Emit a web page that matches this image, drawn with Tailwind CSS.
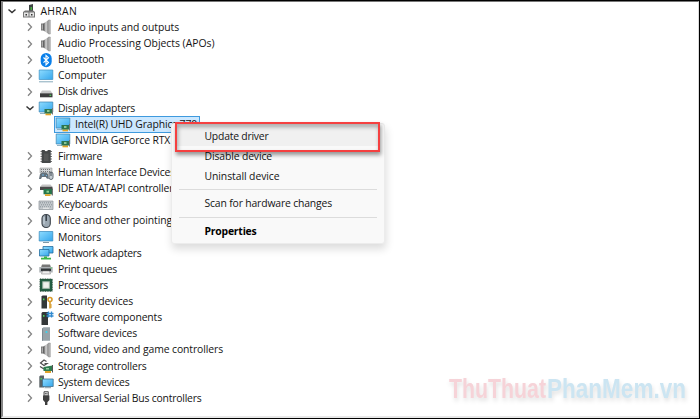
<!DOCTYPE html>
<html lang="en">
<head>
  <meta charset="UTF-8" />
  <meta name="viewport" content="width=device-width, initial-scale=1.0" />
  <title>Device Manager</title>
  <script src="https://cdn.jsdelivr.net/npm/@tailwindcss/browser@4"></script>
</head>
<body class="bg-white text-[#141414] font-['Open_Sans','Noto_Sans',sans-serif]">

  <!-- Icons, all on a 16x16 grid -->
  <svg class="absolute size-0">
    <linearGradient id="screen" x1="0" y1="0" x2="1" y2="1">
      <stop offset="0" stop-color="#8edcff" /><stop offset="1" stop-color="#35a6ec" />
    </linearGradient>
    <linearGradient id="metal" x1="0" y1="0" x2="1" y2="0">
      <stop offset="0" stop-color="#4f4f4f" /><stop offset=".5" stop-color="#d8d8d8" /><stop offset="1" stop-color="#777" />
    </linearGradient>
    <symbol id="pc" viewBox="0 0 16 16">
      <path fill="#3f4444" d="M8 2l4-1v8H8z" /><path fill="#47b13f" d="M9.5 4H11v3H9.5z" />
      <path fill="#777" d="M2 9l2-1.5h8L14 9v5.5H2z" /><path fill="#e4e4e4" d="M3 9.5h4.5v4H3zM8.5 9.5H13v4H8.5z" />
      <path fill="#333" d="M4.5 11H6v1.5H4.5zM10 11h1.5v1.5H10z" />
    </symbol>
    <symbol id="speaker" viewBox="0 0 16 16">
      <path fill="#777" d="M3 4.5h3.5v7H3z" /><path fill="url(#metal)" d="M5.5 4.5l5-3.5v14l-5-3.5z" />
      <path fill="#b5b5b5" stroke="#888" stroke-width=".5" d="M10.5 1h1.8v14h-1.8z" />
      <path fill="#bbb" d="M3.8 5.5h1v5h-1z" />
    </symbol>
    <symbol id="bluetooth" viewBox="0 0 16 16">
      <rect x="2.7" y="1" width="11" height="14.2" rx="5.4" fill="#0a80ea" />
      <path fill="none" stroke="#fff" stroke-width="1.1" d="M5.5 5.5l5 5L8 13V3.4l2.500 2.300-5 5" />
    </symbol>
    <symbol id="computer" viewBox="0 0 16 16">
      <path fill="url(#screen)" stroke="#3a8fc3" stroke-width=".7" d="M1.2 2h13.6v9.500H1.200z" />
      <path fill="#86a9bb" d="M1 13.3h14v1H1z" />
    </symbol>
    <symbol id="disk" viewBox="0 0 16 16">
      <path fill="#c7c7c7" d="M4 6.5h8.500l2 3H2z" /><path fill="#3d3d3d" d="M2 9.300h12.500v4H2z" />
      <path fill="#53d25b" d="M11.500 10.700h1.700v1.200h-1.700z" />
    </symbol>
    <symbol id="display" viewBox="0 0 16 16">
      <path fill="url(#screen)" stroke="#3b83af" stroke-width=".7" d="M1.200 2h13.600v10H1.200z" />
      <path fill="#91b3c3" d="M2 13h5v1H2z" /><path fill="#e4a526" d="M7.500 13.300H13v2H7.500z" />
      <path fill="#2c7550" d="M6.500 9H14v4.500H6.500z" /><path fill="#8bc795" d="M9 10h2.500v2H9z" />
      <path fill="#777" d="M14 8h1v6.500h-1z" />
    </symbol>
    <symbol id="firmware" viewBox="0 0 16 16">
      <path stroke="#777" stroke-width="1" d="M2.500 3.500H14M2.500 6H14M2.500 8.500H14M2.500 11H14M2.500 13.500H14" />
      <path fill="#454849" d="M3.700 2h3a1.500 1.500 0 003 0h3v13h-9z" /><path fill="#666" d="M6 5.500h4.500V13H6z" opacity=".5" />
    </symbol>
    <symbol id="hid" viewBox="0 0 16 16">
      <path fill="#d0d3d5" stroke="#888" stroke-width=".5" d="M2 3h12v5H2z" />
      <path stroke="#777" stroke-dasharray="1 1" d="M3 4.500h10M3 6.500h10" />
      <path fill="#64717b" d="M1 14l1-5 2-1.500h4L10 9l.8 5-2-.5-1-1.500H4l-1 2z" />
      <rect x="11" y="7" width="4" height="7.500" rx="2" fill="#c5cdd3" stroke="#666f76" />
      <path stroke="#3e4850" d="M13 7v4" /><path stroke="#70b5e3" d="M4 10h2M8 10.500h1" />
    </symbol>
    <symbol id="ide" viewBox="0 0 16 16">
      <path fill="#c5c5c5" d="M4 3.500h8.500l2 2.500H2z" /><path fill="#4b4b4b" d="M2 5.800h12.500V9H2z" />
      <path fill="#26774b" d="M5.500 8H14v5.300H5.500z" /><path fill="#8ad094" d="M8.500 9.700H11v2H8.500z" />
      <path fill="#e0a72c" d="M7 13.200h5.500V15H7z" /><path fill="#555" d="M13.800 7.500h1v7h-1z" />
    </symbol>
    <symbol id="keyboard" viewBox="0 0 16 16">
      <path fill="#c3c8cc" stroke="#8c9398" stroke-width=".7" d="M1 4h14v8.500H1z" />
      <path stroke="#8b9399" stroke-dasharray="1 1" d="M2 5.800h12M3 7.800h11M2 9.800h12" /><path stroke="#eee" d="M5 11.200h6" />
    </symbol>
    <symbol id="mouse" viewBox="0 0 16 16">
      <rect x="4" y="1.500" width="8.300" height="13" rx="4.100" fill="#9ca8b2" stroke="#3c434a" stroke-width="1.100" />
      <path stroke="#303840" stroke-width="1.400" d="M8.200 2v6" /><path stroke="#dbe4ec" stroke-width=".8" d="M6 4v7" />
    </symbol>
    <symbol id="monitor" viewBox="0 0 16 16">
      <path fill="url(#screen)" stroke="#3486ba" stroke-width=".7" d="M1.200 2.500h13.600v9.500H1.200z" />
      <path fill="#7c98a8" d="M5 13h6v1H5z" />
    </symbol>
    <symbol id="network" viewBox="0 0 16 16">
      <path fill="url(#screen)" stroke="#246d9e" stroke-width=".8" d="M5 1.500h10V8H5z" />
      <path fill="url(#screen)" stroke="#246d9e" stroke-width=".8" d="M1.500 4.500H11V11H1.500z" />
      <path fill="#3bb54a" d="M6 11.500h3v1.300h4v1.800H3v-1.800h3z" />
    </symbol>
    <symbol id="printer" viewBox="0 0 16 16">
      <path fill="#777" d="M4 3.500h8l1 3H3z" /><path fill="#abb0b4" d="M1.300 6h13.400v5.500H1.300z" />
      <path fill="#30363a" d="M3 7.500h10V10H3z" /><path fill="#eee" stroke="#777" stroke-width=".5" d="M4.500 10h7l1 3h-9z" /><path fill="#5bd06a" d="M12.500 6.400H14v1h-1.500z" />
    </symbol>
    <symbol id="cpu" viewBox="0 0 16 16">
      <path fill="#245f43" stroke="#244b38" stroke-dasharray="1 .7" d="M2 2h12.200v12.200H2z" />
      <path fill="#b9c8bd" d="M4.300 4.300h7.500v7.500H4.300z" /><path fill="#f0f2ee" d="M5.300 5.300h5.500v5.500H5.300z" />
    </symbol>
    <symbol id="security" viewBox="0 0 16 16">
      <path fill="#333738" d="M3.500 2.500l1-1H9v13H3.500z" /><path fill="#49d85a" d="M5 4.500h1.500v1.700H5z" />
      <circle cx="12" cy="5.500" r="2" fill="none" stroke="#d89b2a" stroke-width="1.600" />
      <path fill="#d89b2a" d="M11.200 8h1.600v6.500h-1.600zM12.500 10.500H14v1h-1.500zM12.500 12.500H14v1h-1.500z" />
    </symbol>
    <symbol id="component" viewBox="0 0 16 16">
      <path fill="#333738" d="M3.500 3l1-1H10v13H3.500z" /><path fill="#49d85a" d="M5 5h1.500v1.700H5z" />
      <path fill="none" stroke="#338bd0" stroke-width="1.300" d="M8.500 3.500h7M8.500 6h7M10.500 1.500v6M13.500 1.500v6" />
    </symbol>
    <symbol id="softdev" viewBox="0 0 16 16">
      <path fill="#98a3a9" d="M4 2.500l1.500-1.300H12v13.500H4z" /><path fill="#7d8990" d="M4 2.500h1v12.200H4z" />
      <circle cx="8.500" cy="6" r="1.100" fill="#39d4ef" />
    </symbol>
    <symbol id="storage" viewBox="0 0 16 16">
      <path fill="none" stroke="#4c4c4c" stroke-width="1.200" d="M8.500 3.500L6 2 2.500 5 6 7.500l3-2H6.500M2 8.500L6 11" />
      <path fill="#dfa42c" d="M7 13h6v2H7z" /><path fill="#2f7d4f" d="M5.500 9l9-1.500V13h-9z" />
      <path fill="#97cda0" d="M8 10h3v1.500H8z" /><path fill="#555" d="M14 7h1v7.500h-1z" />
    </symbol>
    <symbol id="system" viewBox="0 0 16 16">
      <path fill="#5a6367" d="M1.300 2.500l1-1H6v12H1.300z" /><path fill="#45d55c" d="M2.500 4H4v1.500H2.500z" />
      <path fill="url(#screen)" stroke="#3d7190" stroke-width=".8" d="M4.500 5h10.700v7.500H4.500z" /><path fill="#8599a5" d="M6.500 13.200H13v1H6.500z" />
    </symbol>
    <symbol id="usb" viewBox="0 0 16 16">
      <path fill="#ddd" stroke="#555" d="M6 1.700h4.300V6H6z" /><path fill="#333" d="M6.900 3h.8v1.200h-.8zM8.500 3h.8v1.200h-.8z" />
      <path fill="#3e3e3e" d="M5 5.500h6.400V10l-2 2.300V15H7v-2.700L5 10z" />
    </symbol>
  </svg>

  <div class="relative h-[419px] w-[700px] overflow-hidden border border-black">
    <div class="h-full border-t border-r border-b-2 border-l-2 border-t-[#777] border-r-[#dcdcdc] border-b-[#e7e7e7] border-l-[#858585]">
      <!-- Device tree -->
      <ul id="tree" class="pt-[1.2px]"></ul>
    </div>

    <!-- Context menu -->
    <div class="absolute top-[122px] left-[170px] flex h-[121px] w-[214px] flex-col rounded-[3px] border border-[#ececec] bg-[#f9f9f9] text-[10.4px] leading-[20px] shadow-[1px_5px_9px_rgba(0,0,0,0.14)]">
      <div class="mx-1 mt-[2px] h-5 shrink-0 bg-[#f0f0f0] pl-[28.5px]"><span data-width="64">Update driver</span></div>
      <div class="h-5 shrink-0 pl-[32.5px]"><span data-width="67.5">Disable device</span></div>
      <div class="h-5 shrink-0 pl-[32.5px]"><span data-width="75">Uninstall device</span></div>
      <div class="mx-[7px] mt-[3px] h-px shrink-0 bg-[#dcdcdc]"></div>
      <div class="mt-[3px] h-5 shrink-0 pl-[32.5px]"><span data-width="127.5">Scan for hardware changes</span></div>
      <div class="mx-[7px] mt-1 h-px shrink-0 bg-[#dcdcdc]"></div>
      <div class="mt-[3px] h-5 shrink-0 pl-[32.5px] font-bold text-black"><span data-width="52" data-weight="bold">Properties</span></div>
    </div>

    <!-- Highlight frame -->
    <div class="absolute top-[121px] left-[174px] h-[30px] w-[205px] border-2 border-[#f54040] shadow-[1px_3px_4px_rgba(0,0,0,0.4),inset_1px_3px_4px_rgba(0,0,0,0.32)]"></div>

    <!-- Watermark -->
    <div class="absolute top-[366px] left-[448px] flex font-['Liberation_Sans_Narrow','Liberation_Sans',sans-serif] text-[27.5px] font-bold drop-shadow-[1px_3px_2px_rgba(0,0,0,0.12)]">
      <svg class="h-[44px] w-[98px] overflow-visible">
        <text x="0" y="31" fill="#f6d3d8" textLength="97" lengthAdjust="spacingAndGlyphs">ThuThuat</text>
      </svg>
      <svg class="h-[44px] w-[140px] overflow-visible">
        <text x="0" y="31" fill="#cce5f2" textLength="139" lengthAdjust="spacingAndGlyphs">PhanMem.vn</text>
      </svg>
    </div>
  </div>

  <script>
    // width is the drawn length of the label in px
    const devices = [
      { level: 0, icon: "pc", label: "AHRAN", width: 36.5, state: "open" },
      { level: 1, icon: "speaker", label: "Audio inputs and outputs", width: 121 },
      { level: 1, icon: "speaker", label: "Audio Processing Objects (APOs)", width: 156.5 },
      { level: 1, icon: "bluetooth", label: "Bluetooth", width: 46 },
      { level: 1, icon: "computer", label: "Computer", width: 48.5 },
      { level: 1, icon: "disk", label: "Disk drives", width: 50 },
      { level: 1, icon: "display", label: "Display adapters", width: 77, state: "open" },
      { level: 2, icon: "display", label: "Intel(R) UHD Graphics 770", width: 122, state: "selected" },
      { level: 2, icon: "display", label: "NVIDIA GeForce RTX 3060", width: 121 },
      { level: 1, icon: "firmware", label: "Firmware", width: 44 },
      { level: 1, icon: "hid", label: "Human Interface Devices", width: 117 },
      { level: 1, icon: "ide", label: "IDE ATA/ATAPI controllers", width: 120 },
      { level: 1, icon: "keyboard", label: "Keyboards", width: 49.5 },
      { level: 1, icon: "mouse", label: "Mice and other pointing devices", width: 152 },
      { level: 1, icon: "monitor", label: "Monitors", width: 43 },
      { level: 1, icon: "network", label: "Network adapters", width: 83.5 },
      { level: 1, icon: "printer", label: "Print queues", width: 59 },
      { level: 1, icon: "cpu", label: "Processors", width: 50 },
      { level: 1, icon: "security", label: "Security devices", width: 75 },
      { level: 1, icon: "component", label: "Software components", width: 104 },
      { level: 1, icon: "softdev", label: "Software devices", width: 79 },
      { level: 1, icon: "speaker", label: "Sound, video and game controllers", width: 165 },
      { level: 1, icon: "storage", label: "Storage controllers", width: 88.5 },
      { level: 1, icon: "system", label: "System devices", width: 71.5 },
      { level: 1, icon: "usb", label: "Universal Serial Bus controllers", width: 143.5 }
    ];

    const indent = ["pl-[4px]", "pl-[21.5px]", "pl-[38.5px]"];

    document.getElementById("tree").innerHTML = devices.map(d => {
      const arrow = d.level === 2 ? "" : d.state === "open"
        ? `<path d="M1.5 3.5l3.5 3 3.5-3" fill="none" stroke="#333" stroke-width="1.5" />`
        : `<path d="M3 1.2l3.5 3.8L3 8.8" fill="none" stroke="#858585" stroke-width="1.3" />`;
      const box = d.state === "selected" ? "bg-[#cce8ff] outline outline-[#3e9ade]" : "";
      return `
        <li class="flex h-[16.13px] items-center ${indent[d.level]}">
          <svg class="mr-[3.5px] size-2.5 shrink-0" viewBox="0 0 10 10">${arrow}</svg>
          <div class="flex h-[15px] items-center pr-[2px] ${box}">
            <svg class="mr-1 size-4 shrink-0"><use href="#${d.icon}" /></svg>
            <span class="text-[10.4px] leading-[15px] whitespace-nowrap" data-width="${d.width}">${d.label}</span>
          </div>
        </li>`;
    }).join("");

    // spread the letters so each label fills its width
    const ctx = document.createElement("canvas").getContext("2d");
    document.querySelectorAll("[data-width]").forEach(el => {
      ctx.font = `${el.dataset.weight || "normal"} 10.4px "Open Sans"`;
      const gap = el.dataset.width - ctx.measureText(el.textContent).width;
      el.style.letterSpacing = gap / el.textContent.length + "px";
    });
  </script>

</body>
</html>
